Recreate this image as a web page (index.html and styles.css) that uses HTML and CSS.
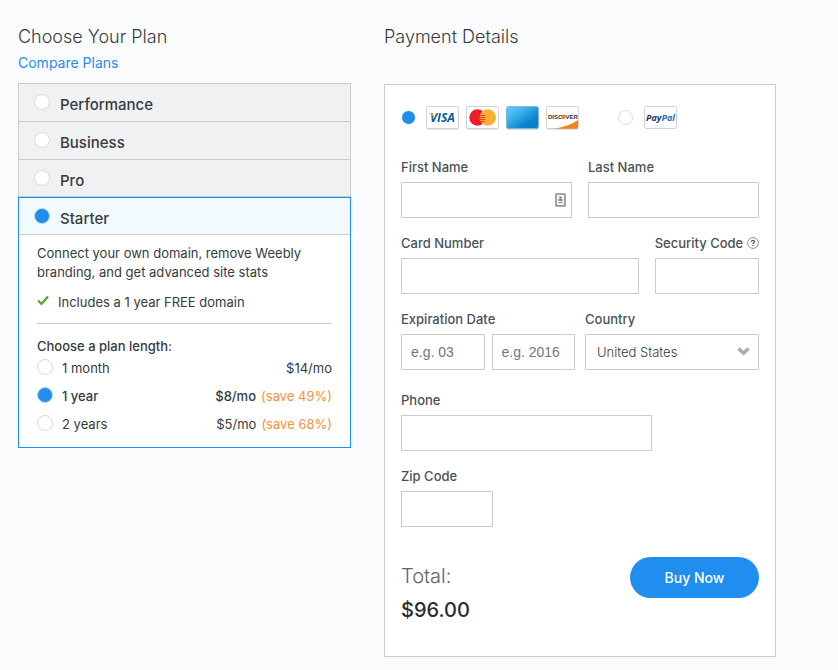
FILE: index.html
```html
<!DOCTYPE html>
<html lang="en">
<head>
<meta charset="utf-8">
<title>Choose Your Plan</title>
<meta name="viewport" content="width=device-width, initial-scale=1">
<link rel="stylesheet" href="styles.css">
</head>
<body>
<main class="checkout">
  <section class="plans">
    <header class="section-head">
      <h1>Choose Your Plan</h1>
      <a class="compare" href="#compare">Compare Plans</a>
    </header>
    <div class="plan-list">
      <label class="plan"><input class="radio" type="radio" name="plan"><span>Performance</span></label>
      <label class="plan"><input class="radio" type="radio" name="plan"><span>Business</span></label>
      <label class="plan"><input class="radio" type="radio" name="plan"><span>Pro</span></label>
    </div>
    <div class="plan-open">
      <label class="plan plan-selected"><input class="radio" type="radio" name="plan" checked><span>Starter</span></label>
      <div class="plan-body">
        <p class="blurb">Connect your own domain, remove Weebly branding, and get advanced site stats</p>
        <p class="perk">
          <svg class="check" viewBox="0 0 12 11" aria-hidden="true"><path d="M1 5.500 4.500 9 11 1.500" fill="none" stroke="#4cab1c" stroke-width="2.200"/></svg>
          <span>Includes a 1 year FREE domain</span>
        </p>
        <h2>Choose a plan length:</h2>
        <label class="term"><input class="radio" type="radio" name="term"><span class="term-name">1 month</span><span>$14/mo</span></label>
        <label class="term term-selected"><input class="radio" type="radio" name="term" checked><span class="term-name">1 year</span><span>$8/mo</span><span class="save">(save 49%)</span></label>
        <label class="term"><input class="radio" type="radio" name="term"><span class="term-name">2 years</span><span>$5/mo</span><span class="save">(save 68%)</span></label>
      </div>
    </div>
  </section>

  <section class="payment">
    <header class="section-head">
      <h1>Payment Details</h1>
    </header>
    <form class="card">
      <div class="methods">
        <label class="method">
          <input class="radio" type="radio" name="method" checked aria-label="Credit card">
          <svg class="brand" viewBox="0 0 33 24" aria-hidden="true">
            <rect x=".5" y="1.5" width="32" height="22" rx="2" fill="#c9c9c9"/>
            <rect x=".5" y=".5" width="32" height="22" rx="2" fill="#fff" stroke="#d2d2d2"/>
            <text x="4" y="16" class="visa">VISA</text>
            <path d="M2.500 7.500h4.500l1.600 4.800C6.800 10 5 8.500 2.500 7.500z" fill="#f7a823"/>
          </svg>
          <svg class="brand" viewBox="0 0 33 24" aria-hidden="true">
            <rect x=".5" y="1.5" width="32" height="22" rx="2" fill="#c9c9c9"/>
            <rect x=".5" y=".5" width="32" height="22" rx="2" fill="#fff" stroke="#d2d2d2"/>
            <circle cx="11.500" cy="11.500" r="8.200" fill="#ed1c2e"/>
            <circle cx="21.800" cy="11.500" r="8.200" fill="#fbb034"/>
            <path d="M14.500 9.500h4.500M13.500 11.500h5.500M13.500 13.500h5.500M14 15.500h4.500" stroke="#ee3a28"/>
          </svg>
          <svg class="brand" viewBox="0 0 33 24" aria-hidden="true">
            <defs><linearGradient id="amex" x1="0" y1="0" x2="1" y2="1"><stop offset="0" stop-color="#5dcbff"/><stop offset=".25" stop-color="#48bcf2"/><stop offset=".7" stop-color="#0c85ca"/><stop offset="1" stop-color="#0b7dbf"/></linearGradient></defs>
            <rect x=".5" y="1.5" width="32" height="22" rx="2" fill="#a9b4bb"/>
            <rect x=".5" y=".5" width="32" height="22" rx="2" fill="url(#amex)" stroke="#83b9d6"/>
          </svg>
          <svg class="brand" viewBox="0 0 33 24" aria-hidden="true">
            <rect x=".5" y="1.5" width="32" height="22" rx="2" fill="#c9c9c9"/>
            <rect x=".5" y=".5" width="32" height="22" rx="2" fill="#fff" stroke="#d2d2d2"/>
            <path d="M7 22.800C17 21.500 26 18 32 14v7.500q0 1.300-1.500 1.300z" fill="#f58220"/>
            <text x="2" y="13" class="discover">DISC</text>
            <circle cx="17.600" cy="10.800" r="2.300" fill="#f58220"/>
            <text x="19.500" y="13" class="discover">VER</text>
          </svg>
        </label>
        <label class="method">
          <input class="radio" type="radio" name="method" aria-label="PayPal">
          <svg class="brand" viewBox="0 0 33 24" aria-hidden="true">
            <rect x=".5" y=".5" width="32" height="22" rx="2" fill="#fff" stroke="#d2d2d2"/>
            <text x="2" y="15" class="paypal"><tspan fill="#1f3a6e">Pay</tspan><tspan fill="#2b6fae">Pal</tspan></text>
          </svg>
        </label>
      </div>

      <div class="row row-names">
        <div class="field">
          <label for="first">First Name</label>
          <div class="control">
            <input class="box" id="first" type="text">
            <svg class="contact" viewBox="0 0 11 14" aria-hidden="true"><rect x="1" y="1" width="9" height="12" rx=".5" fill="#f4f4f4" stroke="#8c8c8c" stroke-width="1.600"/><circle cx="5.500" cy="4.600" r="1.200" fill="#777"/><path d="M3.500 6h4v2h-4zM3.500 9h4v1h-4z" fill="#888"/></svg>
          </div>
        </div>
        <div class="field">
          <label for="last">Last Name</label>
          <input class="box" id="last" type="text">
        </div>
      </div>

      <div class="row row-card">
        <div class="field">
          <label for="number">Card Number</label>
          <input class="box" id="number" type="text">
        </div>
        <div class="field">
          <div class="label-line">
            <label for="code">Security Code</label>
            <svg class="help" viewBox="0 0 12 12" aria-hidden="true"><circle cx="6" cy="6" r="5.400" fill="#fff" stroke="#777" stroke-width=".8"/><path d="M4.500 4.900C4.500 3 7.500 3 7.500 4.800 7.500 5.900 6 5.800 6 7.100" fill="none" stroke="#555" stroke-width="1.200"/><circle cx="6" cy="8.600" r=".75" fill="#555"/></svg>
          </div>
          <input class="box" id="code" type="text">
        </div>
      </div>

      <div class="row row-expiry">
        <div class="field">
          <label for="month">Expiration Date</label>
          <div class="pair">
            <input class="box" id="month" type="text" placeholder="e.g. 03">
            <input class="box" type="text" placeholder="e.g. 2016" aria-label="Expiration year">
          </div>
        </div>
        <div class="field">
          <label for="country">Country</label>
          <div class="control">
            <select class="box" id="country"><option>United States</option></select>
            <svg class="chevron" viewBox="0 0 13 9" aria-hidden="true"><path d="M1.500 1.500 6.500 6.200 11.500 1.500" fill="none" stroke="#a9abad" stroke-width="3.400"/></svg>
          </div>
        </div>
      </div>

      <div class="field field-phone">
        <label for="phone">Phone</label>
        <input class="box" id="phone" type="tel">
      </div>
      <div class="field field-zip">
        <label for="zip">Zip Code</label>
        <input class="box" id="zip" type="text">
      </div>

      <div class="summary">
        <div>
          <p class="total-label">Total:</p>
          <p class="total">$96.00</p>
        </div>
        <button class="buy" type="button">Buy Now</button>
      </div>
    </form>
  </section>
</main>
</body>
</html>
```
FILE: styles.css
```css
* { box-sizing: border-box; }

body {
  margin: 0;
  background: #fafbfd;
  color: #363b3e;
  font: 400 13px/20px Inter, "Liberation Sans", sans-serif;
}

h1, h2, p { margin: 0; }
h1 { font-size: 18px; font-weight: 300; line-height: 28px; }

.checkout {
  display: grid;
  grid-template-columns: 333fr 392fr;
  gap: 33px;
  align-items: start;
  padding: 23px 62px 13px 18px;
}

.section-head { height: 60px; }
.payment .section-head { height: 61px; }
.compare {
  display: block;
  margin-top: 2px;
  color: #2b8ceb;
  font-size: 14px;
  font-weight: 400;
  text-decoration: none;
}

.radio {
  appearance: none;
  flex: none;
  width: 16px;
  height: 16px;
  margin: 0;
  border: 1px solid #d9dbdc;
  border-radius: 50%;
  background: #fff;
}
.radio:checked { border-color: #bcd6ee; background: #208eee; }

.plan-list { border: 1px solid #c9cccf; border-bottom: 0; }
.plan {
  display: flex;
  align-items: flex-start;
  gap: 10px;
  height: 38px;
  padding: 10px 15px 0;
  border-bottom: 1px solid #c9cccf;
  background: #eff1f3;
  font-size: 15px;
  font-weight: 500;
}
.plan span { margin-top: 1px; }
.plan-list .plan:last-child { height: 37px; }
.plan-open { border: 1px solid #208eee; background: #fff; }
.plan-selected { height: 37px; background: #f2f9ff; }
.plan-body { padding: 9px 18px; }

.blurb { line-height: 19px; }
.perk {
  display: flex;
  align-items: center;
  gap: 9px;
  padding: 10px 0 11px;
  border-bottom: 1px solid #c9cccf;
}
.check { width: 12px; height: 11px; margin-bottom: 4px; }
h2 { padding-top: 15px; font-size: 13px; font-weight: 500; line-height: 15px; }
.term { display: flex; align-items: center; gap: 5px; height: 28px; }
.term .radio { margin: 0 4px 2px 0; }
.term-name { flex: 1; }
.term-selected { font-weight: 500; }
.save { color: #f7913d; font-weight: 400; }

.card {
  padding: 21px 16px 32px;
  border: 1px solid #c9cccf;
  background: #fff;
}
.methods { display: flex; gap: 39px; margin-bottom: 27px; }
.method { display: flex; align-items: center; gap: 7px; }
.method .radio { width: 15px; height: 15px; margin: 0 3px 2px 0; }
.method:last-child .radio { margin-right: 4px; }
.method:first-child .radio { border-color: #fff; }
.brand { width: 33px; height: 24px; }
.visa { font: italic 700 12px "Open Sans", sans-serif; fill: #0b5a9d; }
.discover { font: 700 6px "Liberation Sans", sans-serif; fill: #333; }
.paypal { font: italic 700 9px "Open Sans", sans-serif; }

.row { display: grid; gap: 16px; margin-bottom: 15px; }
.row-names { grid-template-columns: 1fr 1fr; }
.row-card { grid-template-columns: 237fr 104fr; }
.row-expiry { grid-template-columns: 174fr 174fr; gap: 10px; margin-bottom: 20px; }

.field { display: flex; flex-direction: column; gap: 5px; min-width: 0; }
.field label { color: #4b5157; font-weight: 500; white-space: nowrap; }
.label-line { display: flex; align-items: center; justify-content: space-between; }
.help { flex: none; width: 12px; height: 12px; }
.control { position: relative; }
.box {
  display: block;
  width: 100%;
  height: 36px;
  padding: 0 9px;
  border: 1px solid #c9cccf;
  border-radius: 0;
  background: #fff;
  color: #363b3e;
  font: 14px "Liberation Sans", sans-serif;
}
.box::placeholder { color: #757575; }
select.box { appearance: none; padding: 0 30px 0 11px; font: 300 13px Inter, sans-serif; }
.pair { display: grid; grid-template-columns: 1fr 1fr; gap: 7px; }
.contact { position: absolute; right: 6px; top: 11px; width: 11px; height: 14px; }
.chevron { position: absolute; right: 9px; top: 13px; width: 13px; height: 9px; }
.field-phone { width: 70%; margin-bottom: 15px; }
.field-zip { width: 92px; }

.summary {
  display: flex;
  align-items: flex-start;
  justify-content: space-between;
  margin-top: 30px;
}
.total-label { margin-top: 5px; color: #5f6366; font-size: 20px; font-weight: 300; line-height: 28px; }
.total { margin-top: 6px; color: #2a2d30; font-size: 20px; font-weight: 500; line-height: 28px; }
.buy {
  width: 129px;
  height: 41px;
  border: 0;
  border-radius: 21px;
  background: #208eee;
  color: #fff;
  font: 500 14px Inter, sans-serif;
}
```
